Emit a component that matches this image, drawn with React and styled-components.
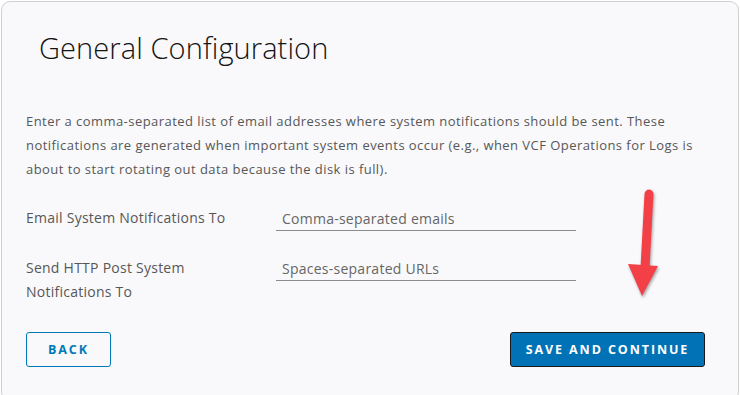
import React from 'react'
import styled, { createGlobalStyle } from 'styled-components'

const Global = createGlobalStyle`
  html, body {
    margin: 0;
    padding: 0;
    background: #ffffff;
  }
  body {
    font-family: "Open Sans", "Liberation Sans", sans-serif;
  }
`

const Card = styled.div`
  position: relative;
  box-sizing: border-box;
  margin: 1px 0 0 1px;
  width: 738px;
  height: 400px;
  background: #f9f9fb;
  border: 1px solid #cfcfd3;
  border-radius: 9px;
  padding: 0 24px;
  display: flex;
  flex-direction: column;
`

const Title = styled.h1`
  margin: 28px 0 0 13px;
  font-size: 29px;
  font-weight: 300;
  color: #141414;
  line-height: 36px;
  letter-spacing: 0.1px;
`

const Intro = styled.p`
  margin: 43px 0 0 0;
  white-space: nowrap;
  font-size: 13px;
  line-height: 24px;
  letter-spacing: 0.45px;
  color: #575757;
`

const Form = styled.div`
  display: flex;
  flex-direction: column;
  gap: 25px;
  margin-top: 25px;
`

const Row = styled.div`
  display: flex;
  align-items: flex-start;
`

const Label = styled.label`
  width: 250px;
  font-size: 14px;
  line-height: 24px;
  letter-spacing: 0.25px;
  color: #575757;
`

const Input = styled.input`
  box-sizing: border-box;
  width: 300px;
  height: 25px;
  border: none;
  border-bottom: 1px solid #8c8c8c;
  background: transparent;
  padding: 0 6px;
  font-family: inherit;
  font-size: 14px;
  letter-spacing: 0.25px;
  color: #575757;
  outline: none;
  &::placeholder {
    color: #666666;
  }
`

const Actions = styled.div`
  display: flex;
  justify-content: space-between;
  margin-top: 28px;
  padding-right: 9px;
`

const Button = styled.button`
  box-sizing: border-box;
  height: 35px;
  width: ${p => (p.primary ? '195px' : '85px')};
  padding: 0;
  border-radius: 3px;
  border: 1px solid ${p => (p.primary ? '#1a1a1a' : '#0079b8')};
  background: ${p => (p.primary ? '#0072b5' : 'transparent')};
  color: ${p => (p.primary ? '#ffffff' : '#0079b8')};
  font-family: inherit;
  font-size: 12.5px;
  font-weight: 700;
  letter-spacing: 1.9px;
  text-transform: uppercase;
  cursor: pointer;
`

const Arrow = styled.svg`
  position: absolute;
  left: 620px;
  top: 182px;
  filter: drop-shadow(1px 2px 1.5px rgba(0, 0, 0, 0.35));
`

export default function App() {
  return (
    <>
      <Global />
      <Card>
        <Title>General Configuration</Title>
        <Intro>
          Enter a comma-separated list of email addresses where system notifications should be sent. These
          <br />
          notifications are generated when important system events occur (e.g., when VCF Operations for Logs is
          <br />
          about to start rotating out data because the disk is full).
        </Intro>
        <Form>
          <Row>
            <Label>Email System Notifications To</Label>
            <Input placeholder="Comma-separated emails" />
          </Row>
          <Row>
            <Label>
              Send HTTP Post System
              <br />
              Notifications To
            </Label>
            <Input placeholder="Spaces-separated URLs" />
          </Row>
        </Form>
        <Actions>
          <Button>Back</Button>
          <Button primary>Save and Continue</Button>
        </Actions>
        <Arrow width="44" height="120" viewBox="0 0 44 120">
          <line x1="27" y1="10" x2="23" y2="84" stroke="#f24046" strokeWidth="9" strokeLinecap="round" />
          <polygon points="6,80 36,82 20,112" fill="#f24046" />
        </Arrow>
      </Card>
    </>
  )
}
